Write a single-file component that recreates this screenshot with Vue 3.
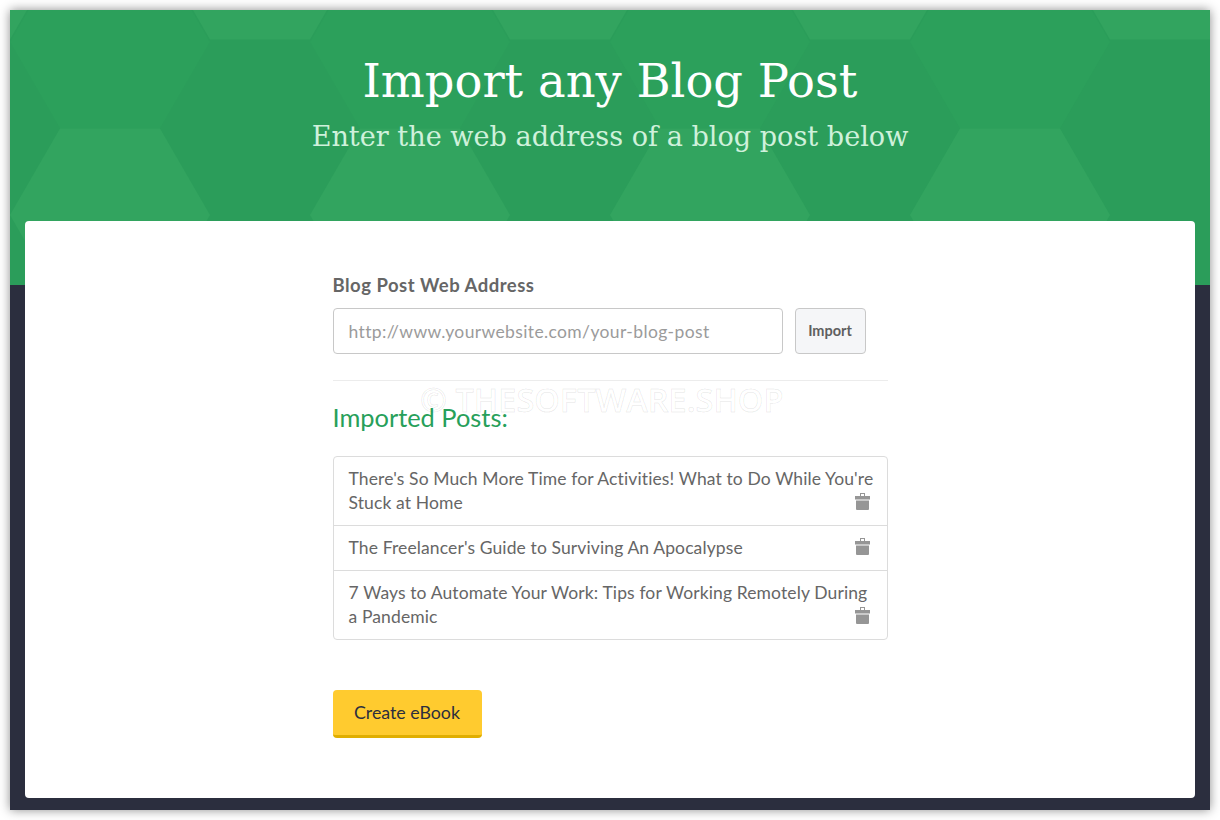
<script setup>
const posts = [
  "There's So Much More Time for Activities! What to Do While You're Stuck at Home",
  "The Freelancer's Guide to Surviving An Apocalypse",
  "7 Ways to Automate Your Work: Tips for Working Remotely During a Pandemic",
]
const hexPoints = (cx, cy) =>
  [[-100, 0], [-50, -86.5], [50, -86.5], [100, 0], [50, 86.5], [-50, 86.5]]
    .map(([x, y]) => `${cx + x},${cy + y}`)
    .join(' ')
const lightHexes = [
  [-40, -47], [260, -47], [560, -47], [860, -47], [1160, -47],
  [110, 215], [410, 215], [710, 215], [1010, 215],
]
const midHexes = [[110, 42], [410, 42], [710, 42], [1010, 42]]
</script>

<template>
  <div class="window">
    <header class="hero">
      <svg class="pattern" width="1200" height="275" viewBox="10 10 1200 275" aria-hidden="true">
        <polygon v-for="h in midHexes" :key="'m' + h[0]" :points="hexPoints(h[0], h[1])" fill="#2ca05b" />
        <polygon v-for="h in lightHexes" :key="'l' + h[0] + h[1]" :points="hexPoints(h[0], h[1])" fill="#32a45f" />
      </svg>
      <h1 class="title">Import any Blog Post</h1>
      <p class="subtitle">Enter the web address of a blog post below</p>
    </header>
    <div class="base">
      <main class="card">
        <div class="column">
          <label class="label">Blog Post Web Address</label>
          <div class="url-row">
            <input class="url" type="text" placeholder="http://www.yourwebsite.com/your-blog-post" />
            <button class="import" type="button">Import</button>
          </div>
          <hr class="rule" />
          <h2 class="list-title">Imported Posts:</h2>
          <ul class="posts">
            <li v-for="post in posts" :key="post" class="post">
              {{ post }}
              <svg class="trash" width="15" height="17" viewBox="0 0 15 17" aria-hidden="true">
                <path fill="#969696" d="M5 0h5v1h-4v2h3V1h1v2h5v3.5H0V3h5z" />
                <path fill="#969696" d="M1 7.5h13V16a1 1 0 0 1-1 1H2a1 1 0 0 1-1-1z" />
              </svg>
            </li>
          </ul>
          <button class="create" type="button">Create eBook</button>
        </div>
        <div class="watermark">© THESOFTWARE.SHOP</div>
      </main>
    </div>
  </div>
</template>

<style>
html, body { background: #fff; margin: 0; }
</style>

<style scoped>
.window {
  width: 1200px;
  height: 800px;
  margin: 10px;
  position: relative;
  display: flex;
  flex-direction: column;
  background: #2b2e3e;
  box-shadow: 0 0 10px rgba(0, 0, 0, 0.45);
  font-family: Lato, "Open Sans", sans-serif;
}
.hero {
  height: 275px;
  flex: none;
  background: #2b9d5a;
  position: relative;
  overflow: hidden;
  text-align: center;
  box-sizing: border-box;
  padding-top: 41px;
}
.pattern { position: absolute; left: 0; top: 0; }
.title {
  position: relative;
  margin: 0;
  font-family: "DejaVu Serif", serif;
  font-weight: 400;
  font-size: 46.4px;
  line-height: 60px;
  color: #fff;
}
.subtitle {
  position: relative;
  margin: 9px 0 0;
  font-family: "DejaVu Serif", serif;
  font-size: 27.1px;
  line-height: 33px;
  color: #cff1db;
}
.base {
  flex: 1;
  padding: 0 15px 12px;
  display: flex;
  margin-top: -64px;
  position: relative;
}
.card {
  flex: 1;
  background: #fff;
  border-radius: 4px;
  position: relative;
  display: flex;
  justify-content: center;
  padding-top: 51px;
  box-sizing: border-box;
}
.column { width: 555px; }
.label {
  display: block;
  font-size: 18.5px;
  font-weight: 700;
  letter-spacing: 0.5px;
  line-height: 26px;
  color: #666;
}
.url-row { display: flex; gap: 12px; margin-top: 10px; }
.url {
  width: 450px;
  height: 46px;
  box-sizing: border-box;
  padding: 0 15px;
  border: 1px solid #c8c8c8;
  border-radius: 4px;
  font: 17.5px Lato, sans-serif;
  letter-spacing: 0.37px;
  outline: none;
}
.url::placeholder { color: #9b9b9b; opacity: 1; }
.import {
  width: 71px;
  height: 46px;
  background: #f5f6f8;
  border: 1px solid #c8c8c8;
  border-radius: 4px;
  font: 700 14.5px Lato, sans-serif;
  color: #5f5f5f;
  padding: 0 0 2px;
}
.rule { border: 0; border-top: 1px solid #ececec; margin: 26px 0 0; }
.list-title {
  margin: 21px 0 0;
  font-size: 25.4px;
  font-weight: 400;
  line-height: 30px;
  color: #27a05a;
}
.posts {
  list-style: none;
  margin: 24px 0 0;
  padding: 0;
  border: 1px solid #dcdcdc;
  border-radius: 4px;
}
.post {
  position: relative;
  padding: 10px 12px 10px 15px;
  font-size: 17.5px;
  letter-spacing: 0.12px;
  line-height: 24px;
  color: #666;
}
.post + .post { border-top: 1px solid #dcdcdc; }
.trash { position: absolute; right: 17px; bottom: 15px; }
.create {
  display: block;
  margin-top: 50px;
  width: 149px;
  height: 48px;
  background: #ffcb2f;
  border: 0;
  border-bottom: 3px solid #e0ae00;
  border-radius: 4px;
  font: 17.8px Lato, sans-serif;
  color: #2b2e3e;
  padding: 0 0 2px;
}
.watermark {
  position: absolute;
  left: 395px;
  top: 157px;
  font-family: "Open Sans", sans-serif;
  font-weight: 600;
  font-size: 32.5px;
  line-height: 44px;
  white-space: nowrap;
  color: transparent;
  -webkit-text-stroke: 1px rgba(0, 0, 0, 0.08);
  pointer-events: none;
}
</style>
